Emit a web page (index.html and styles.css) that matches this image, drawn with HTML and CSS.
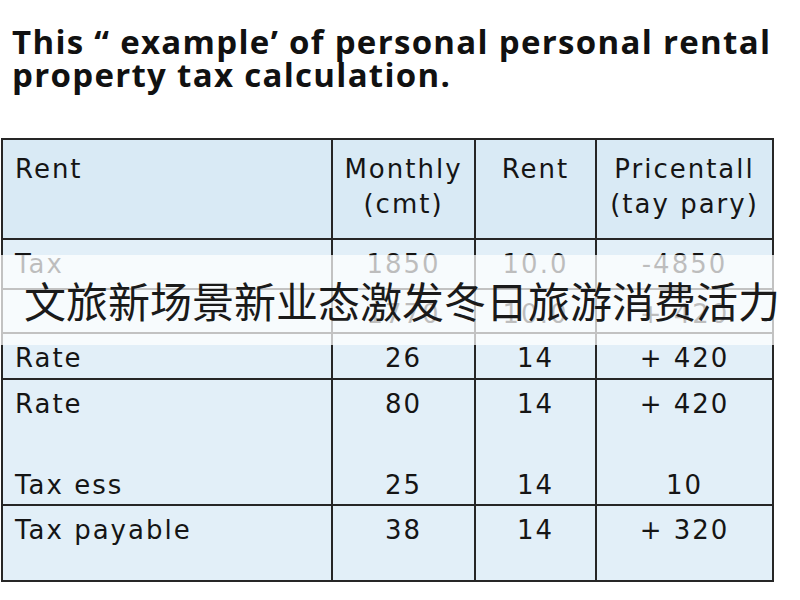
FILE: index.html
```html
<!DOCTYPE html>
<html lang="en">
<head>
<meta charset="utf-8">
<title>Rental property tax calculation</title>
<link rel="stylesheet" href="styles.css">
</head>
<body>
<div class="page">
  <h1 class="title">This “ example’ of personal personal rental<br>property tax calculation.</h1>
  <table class="tax-table">
    <colgroup>
      <col class="c1"><col class="c2"><col class="c3"><col class="c4">
    </colgroup>
    <thead>
      <tr>
        <th class="label">Rent</th>
        <th>Monthly<br>(cmt)</th>
        <th>Rent</th>
        <th>Pricentall<br>(tay pary)</th>
      </tr>
    </thead>
    <tbody>
      <tr class="r-tax">
        <td class="label">Tax</td><td>1850</td><td>10.0</td><td>-4850</td>
      </tr>
      <tr class="r-hidden">
        <td class="label"></td><td>1770</td><td>10.0</td><td>+ 420</td>
      </tr>
      <tr class="r-rate">
        <td class="label">Rate</td><td>26</td><td>14</td><td>+ 420</td>
      </tr>
      <tr class="r-double">
        <td class="label"><div class="stack"><span>Rate</span><span>Tax ess</span></div></td>
        <td><div class="stack"><span>80</span><span>25</span></div></td>
        <td><div class="stack"><span>14</span><span>14</span></div></td>
        <td><div class="stack"><span>+ 420</span><span>10</span></div></td>
      </tr>
      <tr class="r-payable">
        <td class="label">Tax payable</td><td>38</td><td>14</td><td>+ 320</td>
      </tr>
    </tbody>
  </table>
  <div class="caption">文旅新场景新业态激发冬日旅游消费活力</div>
</div>
</body>
</html>
```
FILE: styles.css
```css
html, body {
  margin: 0;
  padding: 0;
  background: #ffffff;
}
.page {
  position: relative;
  width: 800px;
  height: 600px;
  overflow: hidden;
}
.title {
  margin: 0;
  padding: 25px 0 0 12px;
  font-family: "Open Sans", "Noto Sans", sans-serif;
  font-weight: 700;
  font-size: 33px;
  line-height: 33px;
  color: #111;
  letter-spacing: 1.3px;
  white-space: nowrap;
}
.tax-table {
  margin: 47px 0 0 1px;
  border-collapse: collapse;
  width: 771px;
  table-layout: fixed;
  font-family: "DejaVu Sans", "Liberation Sans", sans-serif;
  font-size: 26px;
  letter-spacing: 2px;
  color: #151515;
  background: #e2eff8;
}
.c1 { width: 330px; }
.c2 { width: 143px; }
.c3 { width: 121px; }
.c4 { width: 177px; }
.tax-table th,
.tax-table td {
  border: 2px solid #262626;
  vertical-align: top;
  text-align: center;
  padding: 10px 4px 0;
  line-height: 28px;
  white-space: nowrap;
}
.tax-table th {
  font-weight: 400;
  background: #d9eaf5;
  line-height: 35px;
  padding-top: 12px;
  height: 86px;
}
.tax-table .label {
  text-align: left;
  padding-left: 12px;
}
.r-tax td { height: 38px; }
.r-hidden td { height: 32px; }
.r-rate td { height: 34px; }
.r-double td { height: 114px; }
.r-payable td { height: 64px; }
.stack {
  display: flex;
  flex-direction: column;
  gap: 53px;
}
.caption {
  position: absolute;
  left: 0;
  top: 255px;
  width: 800px;
  height: 90px;
  background: rgba(255, 255, 255, 0.72);
  box-sizing: border-box;
  padding-left: 24px;
  font-family: "Noto Sans CJK SC", sans-serif;
  font-size: 42px;
  line-height: 90px;
  color: #1a1a1a;
  white-space: nowrap;
}
```
